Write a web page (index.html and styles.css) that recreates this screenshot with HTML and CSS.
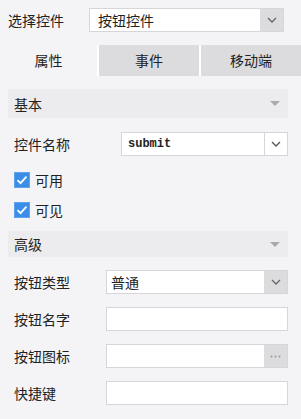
FILE: index.html
```html
<!DOCTYPE html>
<html lang="zh">
<head>
    <meta charset="UTF-8">
    <title>按钮控件</title>
    <link rel="stylesheet" href="styles.css">
</head>
<body>

<div class="top">
    <span class="top-label">选择控件</span>
    <div class="field">
        <span class="field-text">按钮控件</span>
        <span class="btn btn-gray">
            <svg width="10" height="6" viewBox="0 0 10 6"><path d="M1 1l4 4 4-4" fill="none" stroke="#666" stroke-width="1.3"/></svg>
        </span>
    </div>
</div>

<div class="tabs">
    <div class="tab active">属性</div>
    <div class="tab">事件</div>
    <div class="tab">移动端</div>
</div>

<section class="panel">
    <div class="group-head">
        <span>基本</span>
        <span class="caret"></span>
    </div>
    <div class="row row-wide">
        <span class="label">控件名称</span>
        <div class="field">
            <span class="field-text mono">submit</span>
            <span class="btn btn-white">
                <svg width="10" height="6" viewBox="0 0 10 6"><path d="M1 1l4 4 4-4" fill="none" stroke="#555" stroke-width="1.3"/></svg>
            </span>
        </div>
    </div>
    <div class="check-row first">
        <span class="check"><svg width="12" height="10" viewBox="0 0 12 10"><path d="M1.5 5.2l3 3 6-6.5" fill="none" stroke="#fff" stroke-width="1.8"/></svg></span>
        <span>可用</span>
    </div>
    <div class="check-row">
        <span class="check"><svg width="12" height="10" viewBox="0 0 12 10"><path d="M1.5 5.2l3 3 6-6.5" fill="none" stroke="#fff" stroke-width="1.8"/></svg></span>
        <span>可见</span>
    </div>

    <div class="group-head second">
        <span>高级</span>
        <span class="caret"></span>
    </div>
    <div class="row">
        <span class="label">按钮类型</span>
        <div class="field">
            <span class="field-text">普通</span>
            <span class="btn btn-gray">
                <svg width="10" height="6" viewBox="0 0 10 6"><path d="M1 1l4 4 4-4" fill="none" stroke="#666" stroke-width="1.3"/></svg>
            </span>
        </div>
    </div>
    <div class="row">
        <span class="label">按钮名字</span>
        <div class="field"></div>
    </div>
    <div class="row">
        <span class="label">按钮图标</span>
        <div class="field">
            <span class="field-text"></span>
            <span class="btn btn-gray">
                <svg width="11" height="3" viewBox="0 0 11 3"><circle cx="1.5" cy="1.5" r="1" fill="#999"/><circle cx="5.5" cy="1.5" r="1" fill="#999"/><circle cx="9.5" cy="1.5" r="1" fill="#999"/></svg>
            </span>
        </div>
    </div>
    <div class="row">
        <span class="label">快捷键</span>
        <div class="field"></div>
    </div>
</section>

</body>
</html>
```

FILE: styles.css
```css
*{
    margin:0;
    padding:0;
    box-sizing:border-box;
}

body {
    width:301px;
    height:419px;
    background:#f4f4f7;
    font-family:"Noto Sans CJK SC","Noto Sans",sans-serif;
    font-size:14px;
    color:#222;
    overflow:hidden;
}

.top {
    display:flex;
    align-items:center;
    padding:8px 17px 0 8px;
}
.top-label {
    width:81px;
    flex:none;
}

.field {
    flex:1;
    height:24px;
    display:flex;
    align-items:stretch;
    background:#fff;
    border:1px solid #d6d6da;
}
.field-text {
    flex:1;
    line-height:22px;
    padding-left:4px;
    white-space:nowrap;
    overflow:hidden;
}
.top .field-text {
    padding-left:8px;
}
.mono {
    font-family:"Liberation Mono",monospace;
    font-size:12px;
    font-weight:bold;
    padding-left:6px;
}
.btn {
    width:23px;
    flex:none;
    display:flex;
    align-items:center;
    justify-content:center;
}
.btn-gray {
    background:#dcdcdf;
}
.btn-white {
    border-left:1px solid #d6d6da;
}

.tabs {
    margin-top:13px;
    display:grid;
    grid-template-columns:97px 1fr 1fr;
    gap:2px;
    height:31px;
    background:#fff;
}
.tab {
    background:#dcdcdf;
    text-align:center;
    line-height:31px;
}
.tab.active {
    background:#f4f4f7;
}

.panel {
    padding:13px 13px 0 8px;
}
.group-head {
    height:29px;
    background:#ececee;
    display:flex;
    align-items:center;
    justify-content:space-between;
    padding:0 8px 0 6px;
}
.group-head.second {
    margin-top:6px;
    height:26px;
}
.caret {
    width:0;
    height:0;
    border-left:5px solid transparent;
    border-right:5px solid transparent;
    border-top:5px solid #aaa;
}

.row {
    display:flex;
    align-items:center;
    margin-top:13px;
    padding-left:6px;
}
.row-wide {
    margin-top:14px;
}
.label {
    width:92px;
    flex:none;
}
.row-wide .label {
    width:107px;
}

.check-row {
    display:flex;
    align-items:center;
    height:30px;
    padding-left:6px;
    gap:5px;
}
.check-row.first {
    margin-top:9px;
}
.check {
    width:16px;
    height:16px;
    background:#3b8de8;
    border:1px solid #5fa2ee;
    display:flex;
    align-items:center;
    justify-content:center;
}
```
